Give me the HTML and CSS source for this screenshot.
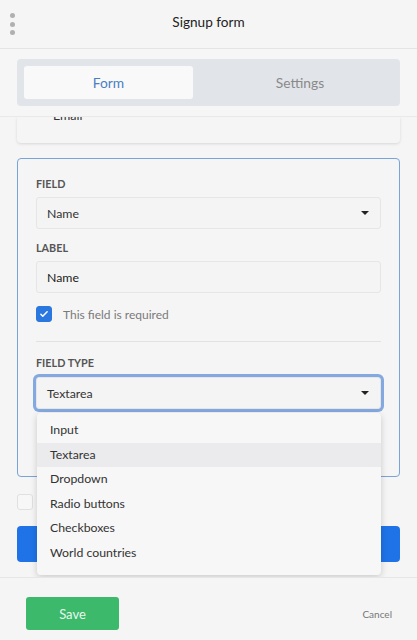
FILE: index.html
```html
<!DOCTYPE html>
<html lang="en">
<head>
<meta charset="utf-8">
<title>Signup form</title>
<link rel="stylesheet" href="styles.css">
</head>
<body>
<div class="app">
  <header class="topbar">
    <span class="dots"><i></i><i></i><i></i></span>
    <h1 class="title">Signup form</h1>
  </header>
  <main class="main">
    <div class="tabs-bar">
      <div class="tabs">
        <div class="tab active">Form</div>
        <div class="tab">Settings</div>
      </div>
    </div>
    <div class="content">
      <div class="email-card">
        <div class="email-row"><span>Email</span><span class="chev">&#709;</span></div>
      </div>
      <section class="field-card">
        <div class="label">FIELD</div>
        <div class="select"><span>Name</span><span class="caret"></span></div>
        <div class="label mt">LABEL</div>
        <div class="input">Name</div>
        <div class="check-row">
          <span class="checkbox on"><svg viewBox="0 0 16 16" width="10" height="10"><path d="M3 8.5l3 3 7-7" fill="none" stroke="#fff" stroke-width="2.4" stroke-linecap="round" stroke-linejoin="round"/></svg></span>
          <span class="check-text">This field is required</span>
        </div>
        <hr class="divider">
        <div class="label mt2">FIELD TYPE</div>
        <div class="select-wrap">
          <div class="select focused"><span>Textarea</span><span class="caret"></span></div>
          <ul class="menu">
            <li>Input</li>
            <li class="hover">Textarea</li>
            <li>Dropdown</li>
            <li>Radio buttons</li>
            <li>Checkboxes</li>
            <li>World countries</li>
          </ul>
        </div>
      </section>
      <div class="after-row"><span class="checkbox"></span></div>
      <div class="blue-btn"></div>
    </div>
  </main>
  <footer class="footer">
    <button class="save">Save</button>
    <span class="cancel">Cancel</span>
  </footer>
</div>
</body>
</html>
```
FILE: styles.css
```css
* { box-sizing: border-box; }
html, body { margin: 0; padding: 0; }
body {
  font-family: Lato, "Open Sans", "Liberation Sans", sans-serif;
  background: #f5f5f5;
  color: #333;
  width: 417px;
  height: 640px;
  overflow: hidden;
}
.app { display: flex; flex-direction: column; height: 640px; }
.topbar {
  height: 49px;
  flex: none;
  display: flex;
  align-items: center;
  justify-content: center;
  position: relative;
  border-bottom: 1px solid #e4e4e4;
  background: #f5f5f5;
}
.dots {
  position: absolute;
  left: 10px;
  top: 13px;
  display: flex;
  flex-direction: column;
  gap: 3.5px;
}
.dots i { display: block; width: 5px; height: 5px; border-radius: 50%; background: #b0b0b0; }
.title { margin: 0 0 4px; font-size: 13.6px; font-weight: 400; color: #222; }
.main { flex: 1; overflow: hidden; position: relative; }
.tabs-bar {
  padding: 10px 17px;
  background: #f6f6f6;
  border-bottom: 1px solid #e9e9e9;
  position: relative;
  z-index: 2;
}
.tabs {
  background: #e1e4e9;
  border-radius: 4px;
  padding: 7px;
  display: grid;
  grid-template-columns: 169px 1fr;
  column-gap: 14px;
}
.tab {
  height: 33px;
  display: flex;
  align-items: center;
  justify-content: center;
  font-size: 13.8px;
  color: #8a8a8a;
  border-radius: 3px;
}
.tab.active { background: #f9f9f9; color: #4b7fc2; }
.content { padding: 0 17px; }
.email-card {
  height: 26px;
  overflow: hidden;
  background: #f5f5f5;
  border-radius: 0 0 4px 4px;
  box-shadow: 0 1px 3px rgba(0,0,0,0.12);
}
.email-row {
  margin-top: -9px;
  display: flex;
  justify-content: space-between;
  padding: 0 36px 0 36px;
  font-size: 12.5px;
  color: #333;
}
.chev { font-size: 9px; color: #555; }
.field-card {
  margin-top: 15px;
  border: 1px solid #7aa3d9;
  border-radius: 4px;
  padding: 18px 18px 67px;
  background: #f5f5f5;
}
.label { font-size: 10.8px; font-weight: 700; color: #555; letter-spacing: 0; line-height: 14px; }
.label.mt { margin-top: 12px; }
.label.mt2 { margin-top: 14px; }
.select, .input {
  margin-top: 6px;
  height: 32px;
  border: 1px solid #e6e6e6;
  border-radius: 3px;
  background: #f4f4f4;
  display: flex;
  align-items: center;
  justify-content: space-between;
  padding: 0 11px 0 10px;
  font-size: 12.3px;
  color: #333;
}
.input { color: #222; }
.caret {
  width: 0; height: 0;
  border-left: 4px solid transparent;
  border-right: 4px solid transparent;
  border-top: 4px solid #222;
}
.check-row { display: flex; align-items: center; margin-top: 13px; gap: 11px; }
.checkbox {
  width: 16px; height: 16px;
  border-radius: 3px;
  border: 1px solid #e0e0e0;
  background: #f7f7f7;
  display: inline-flex;
  align-items: center;
  justify-content: center;
}
.checkbox.on { background: #2a77e0; border-color: #2a77e0; }
.check-text { font-size: 12px; color: #7a7a7a; }
.divider { border: 0; border-top: 1px solid #e2e2e2; margin: 19px 0 0; }
.select-wrap { position: relative; margin-top: 7px; }
.select.focused {
  margin-top: 0;
  box-shadow: 0 0 0 3px #84a9e0;
  border-color: #e6e6e6;
}
.menu {
  position: absolute;
  left: 1px;
  right: 0;
  top: 36px;
  margin: 0;
  padding: 5px 0 9px;
  list-style: none;
  background: #f7f7f7;
  border-radius: 4px;
  box-shadow: 0 2px 7px rgba(0,0,0,0.18);
  z-index: 5;
}
.menu li { height: 24.6px; line-height: 24.6px; padding-left: 13px; font-size: 12.3px; color: #333; }
.menu li.hover { background: #ebebee; }
.after-row { margin-top: 17px; height: 16px; display: flex; }
.blue-btn { margin-top: 16px; height: 36px; background: #1f73e6; border-radius: 4px; }
.footer {
  height: 63px;
  flex: none;
  border-top: 1px solid #e6e6e6;
  background: #f5f5f5;
  display: flex;
  align-items: flex-start;
  justify-content: space-between;
  padding: 19px 25px 0 26px;
}
.save {
  width: 93px;
  height: 33px;
  border: 0;
  border-radius: 3px;
  background: #3cb96b;
  color: #e9f8ee;
  font-family: inherit;
  font-size: 13px;
}
.cancel { font-size: 10px; color: #777; margin-top: 11px; }
```
